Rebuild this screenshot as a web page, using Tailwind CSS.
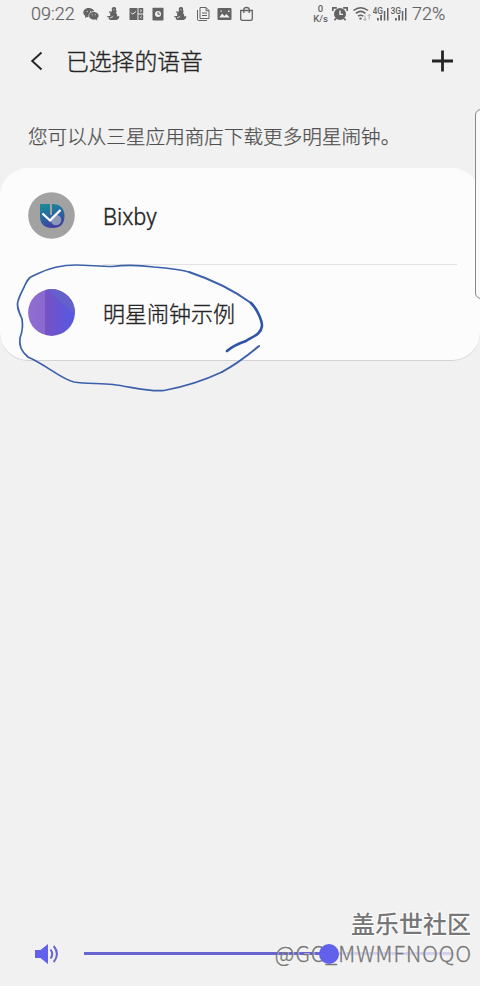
<!DOCTYPE html>
<html lang="zh-CN">
<head>
<meta charset="utf-8">
<title>已选择的语音</title>
<script src="https://cdn.jsdelivr.net/npm/@tailwindcss/browser@4"></script>
</head>
<body class="bg-[#f1f1f1]">
<div class="relative w-[480px] h-[986px] overflow-hidden flex flex-col bg-[#f1f1f1] font-['Roboto','Noto_Sans_CJK_SC',sans-serif] text-[#252525]">
  <header class="h-7 shrink-0 flex items-center pl-[31px] text-[#636363]">
    <span class="w-[52px] text-[18px] leading-7 font-light [-webkit-text-stroke:0.2px_#636363]">09:22</span>
    <div class="flex items-center w-[230px] gap-[8px]">
      <svg class="w-4 h-4 shrink-0" viewBox="0 0 16 16" fill="#636363"><path d="M6 2C2.800 2 .3 4 .3 6.500c0 1.500.8 2.700 2 3.500L2 12l2-1 1.500.2C5 7.500 8 5.200 11.400 5.300 10.600 3.300 8.500 2 6 2Z"/><ellipse cx="10.800" cy="9.800" rx="4.800" ry="3.900"/><path d="m12 13 2.300 1.400-.4-2Z"/><g fill="#f1f1f1"><circle cx="4.200" cy="5.300" r=".6"/><circle cx="7.800" cy="5.300" r=".6"/><circle cx="9.200" cy="8.800" r=".5"/><circle cx="12.300" cy="8.800" r=".5"/></g></svg>
      <svg class="w-[13px] h-4 shrink-0" viewBox="0 0 13 16" fill="#636363"><path d="M7 1c2 0 2.600 1.500 2 3 .9 1.200.6 2.200 0 3 1.300 1.200 1.400 2.500 1 3.500l2.200-.6c.3 1.800-.7 3.300-2.600 4H3.200c-1.400-.6-1.900-1.500-1.500-2.900L0 11.300l.6-1.200 3-.1c-.8-1-1-2.200.1-3.200L1.800 6.500 2 5.400l3 .2L4.700 3C5 1.600 5.800 1 7 1Z"/><path d="m3 12 3-1.500M6.500 3.500l1 .4" stroke="#f1f1f1" fill="none" stroke-width=".8"/></svg>
      <svg class="w-[15px] h-4 shrink-0 ml-px" viewBox="0 0 15 16"><path d="M.5 2h8v12h-8ZM9.500 2h4.700v5.400H9.500ZM9.500 8.400h4.700V14H9.500Z" fill="#636363"/><path d="m2 6.500 1.700 1.700L7 5.500M11.200 3.600l1.400 1.200-1.400 1.200M12.600 10l-1.200 1.200 1.200 1.200" stroke="#f1f1f1" stroke-width="1" fill="none"/></svg>
      <svg class="w-[12px] h-4 shrink-0" viewBox="0 0 12 16"><rect x=".5" y="1.700" width="11" height="12.800" rx=".8" fill="#636363"/><circle cx="6" cy="8" r="3" fill="#f1f1f1"/><path d="M6 6v2.200h2" stroke="#636363" fill="none"/></svg>
      <svg class="w-[13px] h-4 shrink-0 ml-[2px]" viewBox="0 0 13 16" fill="#636363"><path d="M7 1c2 0 2.600 1.500 2 3 .9 1.200.6 2.200 0 3 1.300 1.200 1.400 2.500 1 3.500l2.200-.6c.3 1.800-.7 3.300-2.600 4H3.200c-1.400-.6-1.900-1.500-1.500-2.900L0 11.300l.6-1.200 3-.1c-.8-1-1-2.200.1-3.200L1.800 6.500 2 5.400l3 .2L4.700 3C5 1.600 5.800 1 7 1Z"/><path d="m3 12 3-1.500M6.500 3.500l1 .4" stroke="#f1f1f1" fill="none" stroke-width=".8"/></svg>
      <svg class="w-[14px] h-4 shrink-0 ml-px" viewBox="0 0 14 16" fill="none" stroke="#636363"><path d="M4 12.500v-11h6l3 3v8ZM10 1.500v3.200h3M1.500 4v9.500q0 1 1 1H11M6 7h5M6 9.500h5"/></svg>
      <svg class="w-[15px] h-4 shrink-0 -ml-px" viewBox="0 0 15 16"><rect x=".5" y="2" width="14" height="12" rx="1" fill="#636363"/><path d="m2.300 11.500 2.800-4 2.300 2.600 2-2 3.300 3.400ZM11 4.500h1.500V6H11ZM3.500 4.500h1.300v1.300H3.500Z" fill="#f1f1f1"/></svg>
      <svg class="w-[15px] h-4 shrink-0 -ml-px" viewBox="0 0 15 16" fill="none" stroke="#636363" stroke-width="1.300"><path d="M1.700 4.500h11.600v8.200q0 1.600-1.600 1.600H3.300q-1.600 0-1.600-1.600ZM4.800 7V3.500q0-2 2.700-2t2.700 2V7"/></svg>
    </div>
    <div class="w-[15px] text-[9.500px] text-center font-medium flex flex-col items-center"><span class="h-[8px] leading-[8px]">0</span><span class="h-[10px] leading-[11px]">K/s</span></div>
    <svg class="w-4 h-4 shrink-0 ml-[4px]" viewBox="0 0 16 16"><path d="M.8 5V1.800h4M15.200 5V1.800h-4M3.800 12.500 2.400 14.300M12.200 12.500l1.400 1.800" stroke="#636363" stroke-width="1.700" fill="none"/><circle cx="8" cy="8" r="6" fill="#636363"/><path d="M8 4.600V8.400h3" stroke="#f1f1f1" stroke-width="1.400" fill="none"/></svg>
    <svg class="w-[19px] h-4 shrink-0 ml-[5px]" viewBox="0 0 19 16" fill="none" stroke="#636363" stroke-width="1.500"><path d="M.5 4.500q7-5.700 14.500 0M2.900 7.400q4.800-4 9.500 0M5 10.200q2.700-2 5.200 0"/><circle cx="7.500" cy="12.600" r="1.200" fill="#636363" stroke="none"/><path d="M12 9.500v5m-1.500-1.500 1.500 1.500 1.500-1.500M16.200 13.500v-5m-1.500 1.500 1.500-1.500 1.500 1.500" stroke="#aaa" stroke-width="1"/></svg>
    <svg class="w-[17px] h-4 shrink-0 ml-px" viewBox="0 0 17 16" fill="#636363"><text x="-.5" y="7.500" font-family="Roboto, sans-serif" font-weight="500" font-size="8.500">4G</text><path d="M4 12h1.800v2.500H4ZM7.200 9H9v5.500H7.200ZM10.800 5h1.500v9.500h-1.500ZM14 2h1.500v12.500H14Z"/></svg>
    <svg class="w-[17px] h-4 shrink-0 ml-px" viewBox="0 0 17 16" fill="#636363"><text x="-.5" y="7.500" font-family="Roboto, sans-serif" font-weight="500" font-size="8.500">3G</text><path d="M4 12h1.800v2.500H4ZM7.200 9H9v5.500H7.200ZM10.800 5h1.500v9.500h-1.500ZM14 2h1.500v12.500H14Z"/></svg>
    <span class="ml-[4px] text-[18px] leading-7 font-light [-webkit-text-stroke:0.2px_#636363]">72%</span>
  </header>

  <div class="h-[66px] shrink-0 flex items-center pl-[29px] pr-[26px]">
    <svg class="w-4 h-6" viewBox="0 0 16 24" fill="none" stroke="#252525" stroke-width="1.900"><path d="M12.500 3.500 3.200 12l9.300 8.500"/></svg>
    <h1 class="ml-[21px] mt-[4px] text-[22.8px] leading-8 whitespace-nowrap font-light [-webkit-text-stroke:0.35px_#252525]">已选择的语音</h1>
    <svg class="w-6 h-6 ml-auto" viewBox="0 0 24 24" fill="none" stroke="#252525" stroke-width="2.800"><path d="M12.500 1.500v21M2 12h21"/></svg>
  </div>

  <p class="h-[74px] shrink-0 pt-[30px] pl-[28px] text-[19.6px] leading-7 text-[#505050] whitespace-nowrap font-light [-webkit-text-stroke:0.25px_#505050]">您可以从三星应用商店下载更多明星闹钟。</p>

  <main class="h-[193px] shrink-0 bg-[#fcfcfc] rounded-[28px] border-b border-[#d2d2d2]">
    <div class="h-[95px] flex items-center pl-7">
      <svg class="w-[47px] h-[47px]" viewBox="0 0 47 47">
        <defs><linearGradient id="b" x1="0" y1="0" x2=".35" y2="1"><stop stop-color="#169094"/><stop offset=".5" stop-color="#276ca0"/><stop offset="1" stop-color="#4040a0"/></linearGradient></defs>
        <circle cx="23.500" cy="23.500" r="23.300" fill="#a2a2a2"/>
        <path d="M12 12H22V23H24V12Q36.500 12 36.500 24.500 36 36 24.500 36 12 36 12 24Z" fill="url(#b)"/>
        <circle cx="28" cy="28" r="5.300" fill="#8b98b6"/>
        <path d="m14.500 21.500 7.500 7 10.500-10.500" fill="none" stroke="#fff" stroke-width="2.300"/>
      </svg>
      <span class="ml-[28px] mt-[4px] text-[23px] leading-8 font-light [-webkit-text-stroke:0.35px_#252525]">Bixby</span>
    </div>
    <div class="mt-px h-px ml-[103px] mr-[23px] bg-[#e2e2e2]"></div>
    <div class="h-[95px] flex items-center pl-7">
      <svg class="w-[47px] h-[47px]" viewBox="0 0 47 47">
        <defs><clipPath id="c"><circle cx="23.500" cy="23.500" r="23.400"/></clipPath><linearGradient id="l" x1="0" x2="1"><stop stop-color="#906dd0"/><stop offset="1" stop-color="#8a69d0"/></linearGradient><linearGradient id="r" x1="0" x2="1"><stop stop-color="#7852c4"/><stop offset="1" stop-color="#5359e4"/></linearGradient></defs>
        <g clip-path="url(#c)"><path fill="url(#l)" d="M0 0h17v47H0z"/><path fill="url(#r)" d="M17 0h30v47H17z"/><path d="M19 0h28v26Z" fill="#6460cc"/></g>
      </svg>
      <span class="ml-[28px] mt-[4px] text-[22px] leading-8 font-light [-webkit-text-stroke:0.35px_#252525]">明星闹钟示例</span>
    </div>
  </main>

  <footer class="mt-auto h-16 shrink-0 flex items-center pl-[34px] pr-[28px]">
    <svg class="w-[26px] h-6" viewBox="0 0 26 24"><path d="M1 8h5.500L14 2v20l-7.500-6H1Z" fill="#6261ec"/><path d="M16.500 7.500q3.500 4.500 0 9M19.700 4q6.500 8 0 16" fill="none" stroke="#6765cf" stroke-width="2"/></svg>
    <div class="relative ml-6 -mt-px flex-1 flex items-center">
      <div class="h-[3px] w-[244px] bg-[#6765cf]"></div>
      <div class="h-[3px] flex-1 bg-[#d2d2ee]"></div>
      <div class="absolute left-[235px] w-[20px] h-[20px] rounded-full bg-[#6261ec] z-10"></div>
    </div>
  </footer>

  <div class="absolute left-[475px] top-[109px] w-[20px] h-[190px] rounded-[6px] border border-[#888] bg-[#fafafa]"></div>

  <svg class="absolute left-0 top-[250px] w-[280px] h-[150px]" viewBox="0 0 280 150" fill="none" stroke="#3c60aa" stroke-linecap="round" stroke-linejoin="round">
    <path stroke-width="1.700" d="M222 122C205 130 183 137 164 140.500 149 142 132 137 113 134.500 100 133 86 134 74 132 61 129 48 116 28 107 21 101 19 96 20 88 23 80 23 75 22 69 19 62 16 56 18 51 20 44 23 40 25 35 28 28 30 27 37 24 49 18 63 15 76 15 88 15 100 16.500 112 16.500 124 15 139 15 154 17 166 18 178 19 189 22"/>
    <path stroke-width="2" d="M189 22Q225 34 251 53"/>
    <path stroke-width="2.600" stroke="#2e54a5" d="M251 53C257 59 262 70 262 76 261 84 254 86 246 91Q234 95 227 101"/>
    <path stroke-width="2" d="M259 96Q240 112 222 122"/>
  </svg>

  <div class="absolute right-[9px] top-[906px] text-right text-[#777] whitespace-nowrap font-['Noto_Sans_CJK_SC',sans-serif]">
    <div class="text-[24px] leading-[34px] font-medium [text-shadow:-1px_-1px_0_#fff,1px_-1px_0_#fff,1px_1px_0_#fff]">盖乐世社区</div>
    <div class="-mr-px -mt-px text-[21.5px] leading-[28px] tracking-[1px] font-light [-webkit-text-stroke:0.3px_#777] [text-shadow:1px_-1px_0_#fff9]">@GC_MWMFNOQO</div>
  </div>
</div>
</body>
</html>
